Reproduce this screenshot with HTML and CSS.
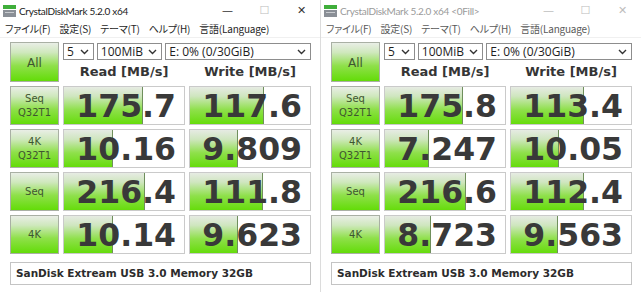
FILE: index.html
```html
<!DOCTYPE html>
<html>
<head>
    <meta name="viewport" content="width=device-width, initial-scale=1.0">
    <title>CrystalDiskMark</title>
    <link rel="stylesheet" href="styles.css">
</head>
<body>
<div class="screen">

    <!-- left window (active) -->
    <div class="win">
        <div class="titlebar">
            <svg class="appicon" width="13" height="12" viewBox="0 0 13 12">
                <rect x="0" y="0" width="13" height="4" fill="#3fae3a"/>
                <rect x="0" y="5" width="13" height="7" fill="#8a8f96"/>
                <rect x="2" y="7" width="9" height="1" fill="#c9ccd0"/>
            </svg>
            <span class="title">CrystalDiskMark 5.2.0 x64</span>
            <span class="ctrls">
                <span class="ctl">&#8212;</span>
                <span class="ctl dim">&#9744;</span>
                <span class="ctl">&#10005;</span>
            </span>
        </div>
        <div class="menubar">
            <span>ファイル(F)</span><span>設定(S)</span><span>テーマ(T)</span><span>ヘルプ(H)</span><span>言語(Language)</span>
        </div>
        <div class="panel">
            <div class="btn all">All</div>
            <div class="top">
                <div class="selects">
                    <div class="sel s-count">5<svg class="chev" width="9" height="6" viewBox="0 0 9 6"><polyline points="1,1 4.5,4.5 8,1" fill="none" stroke="#333" stroke-width="1.4"/></svg></div>
                    <div class="sel s-size">100MiB<svg class="chev" width="9" height="6" viewBox="0 0 9 6"><polyline points="1,1 4.5,4.5 8,1" fill="none" stroke="#333" stroke-width="1.4"/></svg></div>
                    <div class="sel s-drive">E: 0% (0/30GiB)<svg class="chev" width="9" height="6" viewBox="0 0 9 6"><polyline points="1,1 4.5,4.5 8,1" fill="none" stroke="#333" stroke-width="1.4"/></svg></div>
                </div>
                <div class="heads"><div>Read [MB/s]</div><div>Write [MB/s]</div></div>
            </div>

            <div class="btn two">Seq<br>Q32T1</div>
            <div class="cell"><div class="bar" style="width:79px"></div><div class="num">175.7</div></div>
            <div class="cell"><div class="bar" style="width:74px"></div><div class="num">117.6</div></div>

            <div class="btn two">4K<br>Q32T1</div>
            <div class="cell"><div class="bar" style="width:49px"></div><div class="num">10.16</div></div>
            <div class="cell"><div class="bar" style="width:48px"></div><div class="num">9.809</div></div>

            <div class="btn">Seq</div>
            <div class="cell"><div class="bar" style="width:81px"></div><div class="num">216.4</div></div>
            <div class="cell"><div class="bar" style="width:73px"></div><div class="num">111.8</div></div>

            <div class="btn">4K</div>
            <div class="cell"><div class="bar" style="width:49px"></div><div class="num">10.14</div></div>
            <div class="cell"><div class="bar" style="width:48px"></div><div class="num">9.623</div></div>
        </div>
        <div class="comment">SanDisk Extream USB 3.0 Memory 32GB</div>
    </div>

    <!-- right window (inactive) -->
    <div class="win inactive">
        <div class="titlebar">
            <svg class="appicon" width="13" height="12" viewBox="0 0 13 12">
                <rect x="0" y="0" width="13" height="4" fill="#3fae3a"/>
                <rect x="0" y="5" width="13" height="7" fill="#8a8f96"/>
                <rect x="2" y="7" width="9" height="1" fill="#c9ccd0"/>
            </svg>
            <span class="title">CrystalDiskMark 5.2.0 x64 &lt;0Fill&gt;</span>
            <span class="ctrls">
                <span class="ctl">&#8212;</span>
                <span class="ctl">&#9744;</span>
                <span class="ctl">&#10005;</span>
            </span>
        </div>
        <div class="menubar">
            <span>ファイル(F)</span><span>設定(S)</span><span>テーマ(T)</span><span>ヘルプ(H)</span><span>言語(Language)</span>
        </div>
        <div class="panel">
            <div class="btn all">All</div>
            <div class="top">
                <div class="selects">
                    <div class="sel s-count">5<svg class="chev" width="9" height="6" viewBox="0 0 9 6"><polyline points="1,1 4.5,4.5 8,1" fill="none" stroke="#333" stroke-width="1.4"/></svg></div>
                    <div class="sel s-size">100MiB<svg class="chev" width="9" height="6" viewBox="0 0 9 6"><polyline points="1,1 4.5,4.5 8,1" fill="none" stroke="#333" stroke-width="1.4"/></svg></div>
                    <div class="sel s-drive">E: 0% (0/30GiB)<svg class="chev" width="9" height="6" viewBox="0 0 9 6"><polyline points="1,1 4.5,4.5 8,1" fill="none" stroke="#333" stroke-width="1.4"/></svg></div>
                </div>
                <div class="heads"><div>Read [MB/s]</div><div>Write [MB/s]</div></div>
            </div>

            <div class="btn two">Seq<br>Q32T1</div>
            <div class="cell"><div class="bar" style="width:78px"></div><div class="num">175.8</div></div>
            <div class="cell"><div class="bar" style="width:73px"></div><div class="num">113.4</div></div>

            <div class="btn two">4K<br>Q32T1</div>
            <div class="cell"><div class="bar" style="width:44px"></div><div class="num">7.247</div></div>
            <div class="cell"><div class="bar" style="width:48px"></div><div class="num">10.05</div></div>

            <div class="btn">Seq</div>
            <div class="cell"><div class="bar" style="width:81px"></div><div class="num">216.6</div></div>
            <div class="cell"><div class="bar" style="width:73px"></div><div class="num">112.4</div></div>

            <div class="btn">4K</div>
            <div class="cell"><div class="bar" style="width:46px"></div><div class="num">8.723</div></div>
            <div class="cell"><div class="bar" style="width:47px"></div><div class="num">9.563</div></div>
        </div>
        <div class="comment">SanDisk Extream USB 3.0 Memory 32GB</div>
    </div>

</div>
</body>
</html>
```

FILE: styles.css
```css
body {
    margin: 0;
    background-color: #ffffff;
    font-family: "DejaVu Sans", sans-serif;
}

.screen {
    display: flex;
    width: 642px;
    height: 292px;
    overflow: hidden;
}

.win {
    width: 320px;
    flex: none;
    background-color: #ffffff;
}
.win.inactive {
    width: 320px;
    border-left: 1px solid #dcdcdc;
}

/* title bar */
.titlebar {
    display: flex;
    align-items: center;
    height: 21px;
    padding-left: 3px;
}
.appicon {
    flex: none;
    margin-top: 1px;
}
.title {
    margin-left: 3px;
    font-family: "Lato", sans-serif;
    font-size: 10px;
    letter-spacing: -0.3px;
    color: #1a1a1a;
}
.inactive .title {
    color: #9a9a9a;
}
.ctrls {
    margin-left: auto;
    display: flex;
}
.ctl {
    width: 37px;
    text-align: center;
    font-family: "DejaVu Sans", sans-serif;
    font-size: 11px;
    color: #333333;
}
.ctl.dim,
.inactive .ctl {
    color: #bdbdbd;
}

/* menu */
.menubar {
    display: flex;
    gap: 9px;
    height: 16px;
    line-height: 16px;
    padding-left: 5px;
    font-family: "Noto Sans CJK JP", sans-serif;
    font-size: 10px;
    font-feature-settings: "palt";
    letter-spacing: -0.2px;
    color: #262626;
    border-bottom: 1px solid #f0f0f0;
}
.inactive .menubar {
    color: #5a5a5a;
}

/* main grid */
.panel {
    display: grid;
    grid-template-columns: 49px 122px 122px;
    grid-template-rows: 40px repeat(4, 39px);
    column-gap: 4px;
    row-gap: 4px;
    padding: 4px 0 0 10px;
}

.btn {
    display: flex;
    align-items: center;
    justify-content: center;
    text-align: center;
    box-sizing: border-box;
    border: 1px solid #a9b0a4;
    background: linear-gradient(#e9eee6 0%, #cfe8bd 25%, #8fe04a 60%, #63dc08 100%);
    font-size: 10px;
    line-height: 14px;
    color: #3e5630;
}
.btn.all {
    font-size: 12px;
    padding-top: 2px;
}

.top {
    grid-column: span 2;
    display: flex;
    flex-direction: column;
}
.selects {
    display: flex;
    gap: 3px;
    margin-top: 1px;
}
.sel {
    display: flex;
    align-items: center;
    justify-content: space-between;
    box-sizing: border-box;
    height: 17px;
    padding: 0 4px 0 3px;
    border: 1px solid #8d8d8d;
    font-family: "Open Sans", sans-serif;
    font-size: 12px;
    color: #1e1e1e;
}
.s-count { width: 31px; }
.s-size { width: 66px; }
.s-drive { width: 147px; }

.heads {
    display: grid;
    grid-template-columns: 122px 122px;
    column-gap: 4px;
    margin-top: 4px;
    font-weight: bold;
    font-size: 13px;
    color: #353535;
    text-align: center;
}

.cell {
    display: grid;
    box-sizing: border-box;
    border: 1px solid #cacaca;
    background-color: #ffffff;
}
.cell > div {
    grid-area: 1 / 1;
}
.bar {
    justify-self: start;
    height: 100%;
    box-sizing: border-box;
    border-right: 1px solid #6f8f5c;
    background: linear-gradient(#e6ebe3 0%, #cfe6bf 25%, #8ee04a 62%, #66dc0c 100%);
}
.num {
    justify-self: end;
    align-self: center;
    padding-right: 8px;
    font-weight: bold;
    font-size: 31.5px;
    line-height: 36px;
    color: #393939;
}

.comment {
    box-sizing: border-box;
    height: 23px;
    line-height: 21px;
    margin: 8px 0 0 10px;
    width: 301px;
    padding-left: 5px;
    border: 1px solid #c4c4c4;
    font-weight: bold;
    font-size: 10.5px;
    color: #2c2c2c;
}
```
